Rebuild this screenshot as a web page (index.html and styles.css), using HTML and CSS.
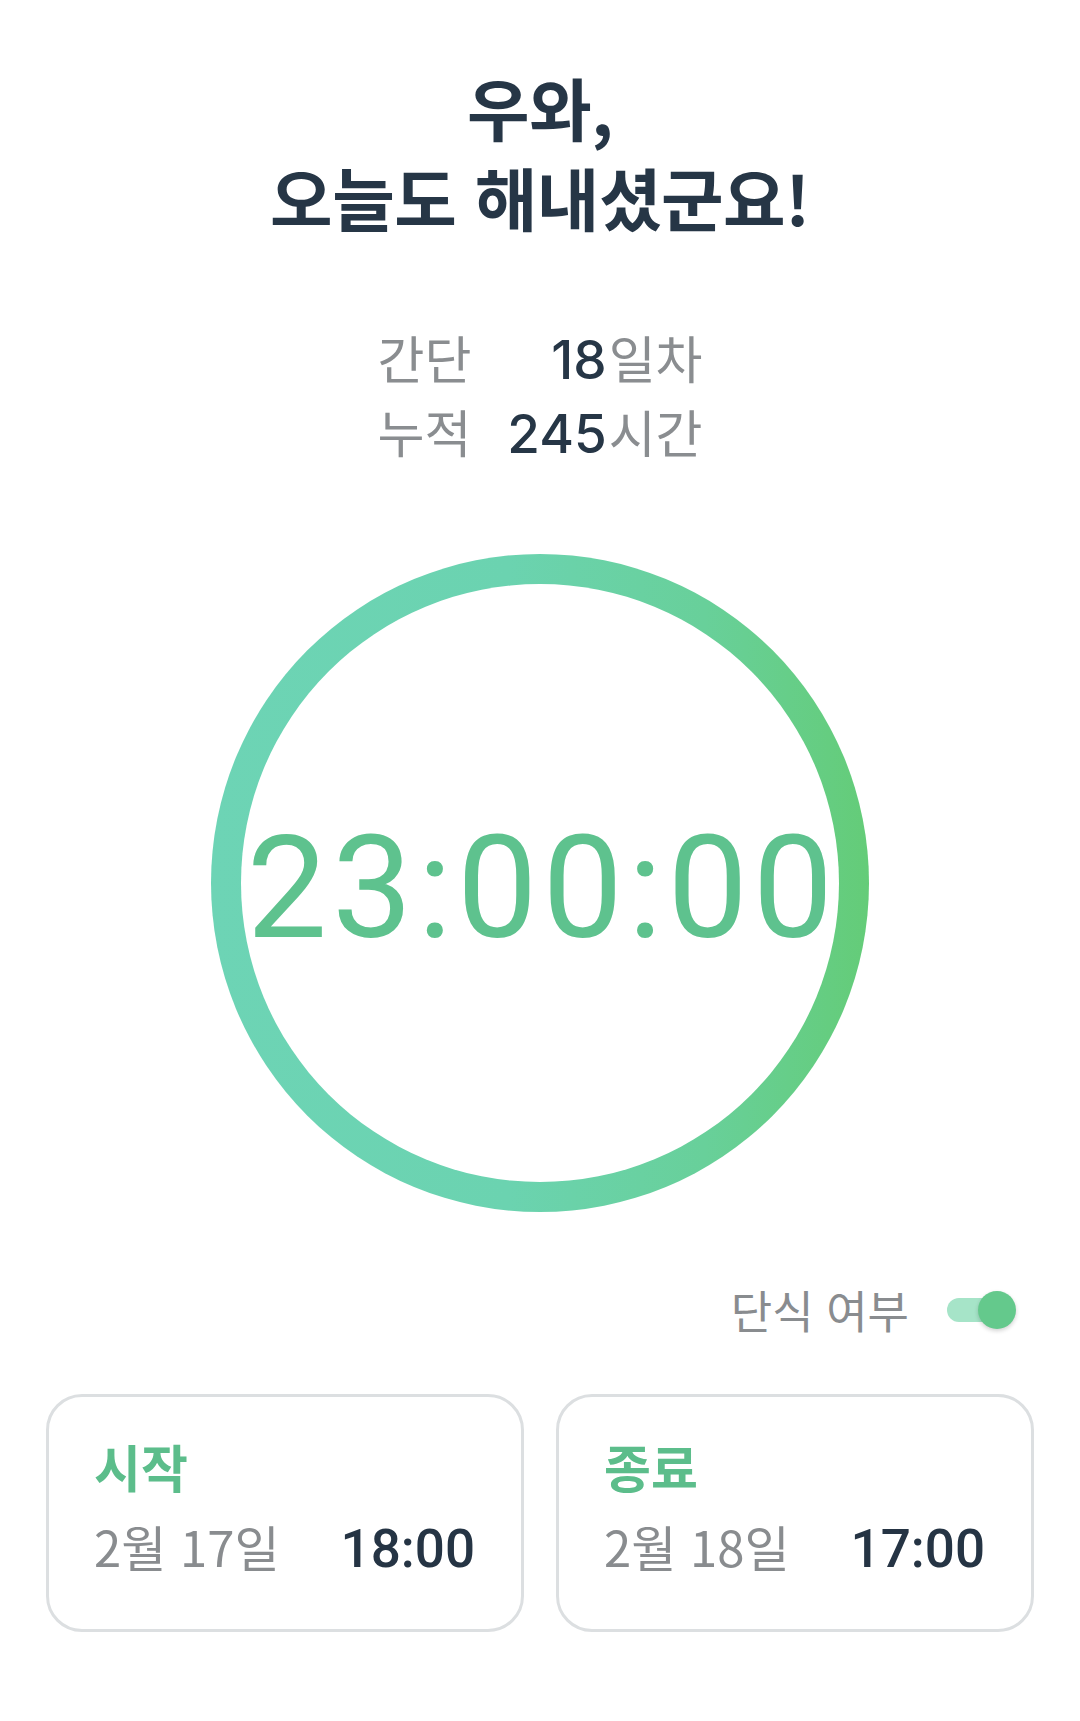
FILE: index.html
```html
<!DOCTYPE html>
<html lang="ko">
<head>
<meta charset="utf-8">
<title>단식</title>
<link rel="stylesheet" href="styles.css">
</head>
<body>
<main class="page">
  <h1 class="title">우와,<br>오늘도 해내셨군요!</h1>

  <div class="stats">
    <span class="stat-label">간단</span>
    <span class="stat-value"><span class="num">18</span><span class="unit">일차</span></span>
    <span class="stat-label">누적</span>
    <span class="stat-value"><span class="num">245</span><span class="unit">시간</span></span>
  </div>

  <div class="timer">
    <div class="ring">
      <div class="ring-inner">
        <span class="clock">23:00:00</span>
      </div>
    </div>
  </div>

  <div class="toggle-row">
    <span class="toggle-label">단식 여부</span>
    <span class="switch"><span class="track"></span><span class="knob"></span></span>
  </div>

  <div class="cards">
    <section class="card">
      <div class="card-title">시작</div>
      <div class="card-row">
        <span class="date">2월 17일</span>
        <span class="time">18:00</span>
      </div>
    </section>
    <section class="card">
      <div class="card-title">종료</div>
      <div class="card-row">
        <span class="date">2월 18일</span>
        <span class="time">17:00</span>
      </div>
    </section>
  </div>
</main>
</body>
</html>
```

FILE: styles.css
```css
* { box-sizing: border-box; }

html, body {
  margin: 0;
  padding: 0;
  background: #ffffff;
}

body {
  font-family: "Noto Sans CJK KR", "Noto Sans", sans-serif;
  width: 1080px;
  height: 1721px;
  overflow: hidden;
}

.page {
  padding-top: 62px;
  display: flex;
  flex-direction: column;
}

.title {
  margin: 0;
  text-align: center;
  font-size: 68px;
  line-height: 90px;
  font-weight: 700;
  color: #263646;
  letter-spacing: -0.5px;
}

.stats {
  margin-top: 80px;
  display: grid;
  grid-template-columns: auto auto;
  column-gap: 36px;
  justify-content: center;
  line-height: 71px;
}

.stat-label {
  font-size: 51px;
  color: #8a8d90;
}

.stat-value {
  justify-self: end;
  display: flex;
  align-items: baseline;
}

.num {
  font-family: "Inter", "Roboto", sans-serif;
  font-size: 53px;
  font-weight: 500;
  color: #263646;
  margin-right: 2px;
}

.unit {
  font-size: 51px;
  color: #8a8d90;
}

.timer {
  margin-top: 84px;
  display: flex;
  justify-content: center;
}

.ring {
  width: 658px;
  height: 658px;
  border-radius: 50%;
  padding: 30px;
  background: linear-gradient(90deg, #6dd4b5 0%, #6bd3b0 45%, #68d09a 75%, #64cc78 100%);
}

.ring-inner {
  width: 100%;
  height: 100%;
  border-radius: 50%;
  background: #ffffff;
  display: flex;
  align-items: center;
  justify-content: center;
}

.clock {
  font-family: "Roboto", "Inter", sans-serif;
  font-size: 143px;
  font-weight: 400;
  color: #5ec28e;
  line-height: 1;
  letter-spacing: 5px;
  padding-top: 10px;
  margin-right: -5px;
  white-space: nowrap;
}

.toggle-row {
  margin-top: 72px;
  padding-right: 64px;
  display: flex;
  justify-content: flex-end;
  align-items: center;
  gap: 38px;
}

.toggle-label {
  font-size: 45px;
  color: #898c8f;
  line-height: 52px;
}

.switch {
  position: relative;
  width: 69px;
  height: 38px;
  display: block;
}

.track {
  position: absolute;
  left: 0;
  top: 7px;
  width: 58px;
  height: 24px;
  border-radius: 12px;
  background: #a6e4c8;
}

.knob {
  position: absolute;
  right: 0;
  top: 0;
  width: 38px;
  height: 38px;
  border-radius: 50%;
  background: #64c98c;
  box-shadow: 0 2px 4px rgba(0, 0, 0, 0.18);
}

.cards {
  margin-top: 58px;
  padding: 0 46px;
  display: flex;
  gap: 32px;
}

.card {
  flex: 1;
  height: 238px;
  border: 3px solid #dcdfe1;
  border-radius: 36px;
  padding: 36px 46px 0 45px;
}

.card-title {
  font-size: 51px;
  font-weight: 700;
  color: #5cbd8b;
  line-height: 66px;
}

.card-row {
  margin-top: 14px;
  display: flex;
  justify-content: space-between;
  align-items: baseline;
  line-height: 66px;
}

.date {
  font-size: 49px;
  color: #898c8f;
}

.time {
  font-family: "Roboto", "Inter", sans-serif;
  font-size: 53px;
  font-weight: 500;
  color: #253444;
}
```
